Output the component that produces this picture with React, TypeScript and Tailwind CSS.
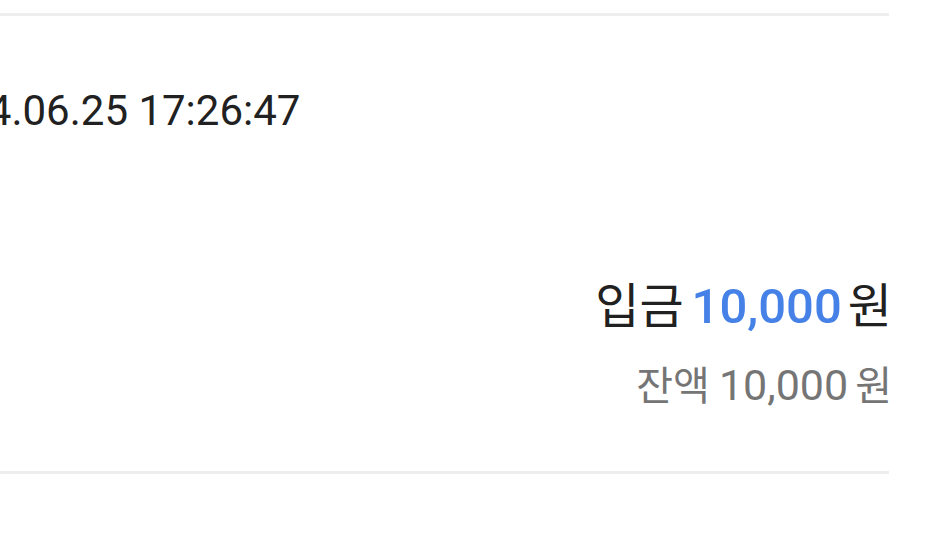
export default function App() {
  const font = { fontFamily: '"Roboto", "Noto Sans CJK KR", sans-serif' };
  return (
    <div className="w-[928px] h-[543px] overflow-hidden bg-white" style={font}>
      <div className="mt-[13px] -ml-[85px] w-[974px] border-y-[3px] border-[#eeeeee] pt-[70px] pb-[62px]">
        <div className="text-[42px] leading-[50px] text-[#212121] whitespace-nowrap ml-[2px]">
          2024.06.25 17:26:47
        </div>
        <div className="mt-[142px] -mr-[3px] flex flex-col items-end">
          <div className="flex items-baseline h-[58px] leading-[58px] text-[#212121] whitespace-nowrap">
            <span className="text-[48px]">입금</span>
            <span className="ml-[8px] text-[49px] font-medium text-[#4581e6]">10,000</span>
            <span className="ml-[6px] text-[48px]">원</span>
          </div>
          <div className="mt-[25px] flex items-baseline h-[48px] leading-[48px] text-[#757575] whitespace-nowrap">
            <span className="text-[40px]">잔액</span>
            <span className="ml-[9px] text-[43px]">10,000</span>
            <span className="ml-[7px] text-[40px]">원</span>
          </div>
        </div>
      </div>
    </div>
  );
}
